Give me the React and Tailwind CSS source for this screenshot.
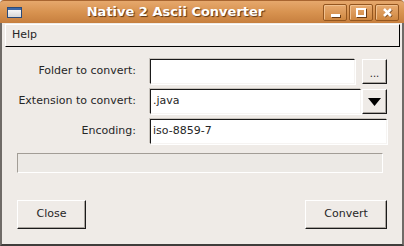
function WinButton({ children }) {
  return (
    <div className="flex h-[17px] w-[24px] items-center justify-center rounded-[2px] border border-[#94561f] bg-gradient-to-b from-[#e8ab70] to-[#cf873f] shadow-[inset_1px_1px_0_#f0c08e]">
      {children}
    </div>
  )
}

function Field({ children, className = '' }) {
  return (
    <div
      className={`flex h-[25px] items-center border border-t-[#1a1a1a] border-l-[#1a1a1a] border-b-[#f6f4f2] border-r-[#f6f4f2] bg-white pl-[2px] shadow-[1px_1px_0_#fff,-1px_-1px_0_#c9c4be] ${className}`}
    >
      {children}
    </div>
  )
}

function RaisedButton({ children, className = '' }) {
  return (
    <div
      className={`flex items-center justify-center border border-t-white border-l-white border-b-[#1a1a1a] border-r-[#1a1a1a] bg-[#efebe7] shadow-[inset_-1px_-1px_0_#a9a49e] ${className}`}
    >
      {children}
    </div>
  )
}

export default function App() {
  return (
    <div className="flex h-[246px] w-[404px] flex-col bg-[#efebe7] font-['DejaVu_Sans',sans-serif] text-[11px] text-[#262626]">
      <div className="flex h-[23px] shrink-0 items-center rounded-t-[4px] border-t border-[#a86530] bg-gradient-to-b from-[#e6a86c] via-[#d89350] to-[#c77f3e] pl-[7px] pr-[5px]">
        <div className="h-[11px] w-[15px] border border-[#2b4a78] bg-gradient-to-b from-white to-[#d6d6d6] shadow-[inset_0_2px_0_#3e68a6]" />
        <div className="flex-1 pl-[6px] text-center text-[13px] font-bold text-white [text-shadow:1px_1px_1px_#5b3414]">
          Native 2 Ascii Converter
        </div>
        <div className="flex gap-[2px]">
          <WinButton>
            <div className="mt-[6px] h-[3px] w-[9px] bg-white shadow-[1px_1px_0_#6b3c15]" />
          </WinButton>
          <WinButton>
            <div className="h-[9px] w-[10px] border-2 border-white shadow-[1px_1px_0_#6b3c15]" />
          </WinButton>
          <WinButton>
            <svg width="11" height="11" viewBox="0 0 11 11">
              <path d="M2 2 L9 9 M9 2 L2 9" stroke="#6b3c15" strokeWidth="2.6" transform="translate(0.7 0.7)" />
              <path d="M2 2 L9 9 M9 2 L2 9" stroke="white" strokeWidth="2.6" />
            </svg>
          </WinButton>
        </div>
      </div>

      <div className="flex flex-1 flex-col border-x-2 border-b-2 border-x-[#6f6b67] border-b-[#3f3d3b]">
        <div className="ml-[3px] mr-[2px] mt-[1px] flex h-[23px] items-center border border-t-white border-l-white border-b-black border-r-black pl-[6px]">
          Help
        </div>

        <div className="ml-0 mr-[15px] mt-[12px] grid grid-cols-[134px_1fr] items-center gap-x-[14px] gap-y-[5px]">
          <div className="text-right">Folder to convert:</div>
          <div className="flex items-center gap-[7px]">
            <Field className="flex-1" />
            <RaisedButton className="h-[25px] w-[25px] text-[10px] leading-none">
              <span className="mt-[4px]">...</span>
            </RaisedButton>
          </div>

          <div className="text-right">Extension to convert:</div>
          <div className="flex items-center gap-[1px]">
            <Field className="flex-1">.java</Field>
            <RaisedButton className="h-[25px] w-[25px]">
              <svg width="13" height="8" viewBox="0 0 13 8">
                <path d="M0 0 H13 L6.5 8 Z" fill="#000" />
              </svg>
            </RaisedButton>
          </div>

          <div className="text-right">Encoding:</div>
          <Field>iso-8859-7</Field>
        </div>

        <div className="ml-[15px] mr-[19px] mt-[9px] h-[20px] border border-t-[#a29d96] border-l-[#a29d96] border-b-white border-r-white bg-[#ece9e5]" />

        <div className="mx-[15px] mt-[27px] flex justify-between">
          <RaisedButton className="h-[29px] w-[69px]">Close</RaisedButton>
          <RaisedButton className="h-[29px] w-[82px]">Convert</RaisedButton>
        </div>
      </div>
    </div>
  )
}
